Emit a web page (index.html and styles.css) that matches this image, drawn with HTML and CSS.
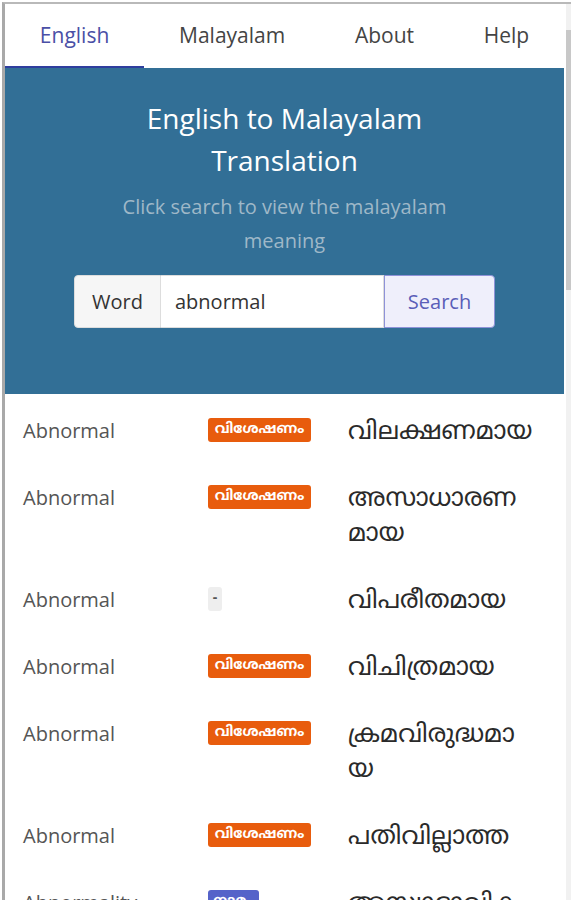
FILE: index.html
```html
<!DOCTYPE html>
<html lang="en">
<head>
<meta charset="utf-8">
<title>English to Malayalam</title>
<link rel="stylesheet" href="styles.css">
</head>
<body>
<div class="window">
  <div class="app">
    <nav class="tabs">
      <a class="tab active">English</a>
      <a class="tab">Malayalam</a>
      <a class="tab">About</a>
      <a class="tab">Help</a>
    </nav>
    <header class="hero">
      <h1 class="title">English to Malayalam Translation</h1>
      <p class="subtitle">Click search to view the malayalam meaning</p>
      <div class="search">
        <span class="addon">Word</span>
        <span class="input">abnormal</span>
        <span class="btn">Search</span>
      </div>
    </header>
    <div class="results">
      <div class="row">
        <div class="en">Abnormal</div>
        <div class="pos"><span class="badge orange">വിശേഷണം</span></div>
        <div class="ml">വിലക്ഷണമായ</div>
      </div>
      <div class="row">
        <div class="en">Abnormal</div>
        <div class="pos"><span class="badge orange">വിശേഷണം</span></div>
        <div class="ml">അസാധാരണ<br>മായ</div>
      </div>
      <div class="row">
        <div class="en">Abnormal</div>
        <div class="pos"><span class="badge grey">-</span></div>
        <div class="ml">വിപരീതമായ</div>
      </div>
      <div class="row">
        <div class="en">Abnormal</div>
        <div class="pos"><span class="badge orange">വിശേഷണം</span></div>
        <div class="ml">വിചിത്രമായ</div>
      </div>
      <div class="row">
        <div class="en">Abnormal</div>
        <div class="pos"><span class="badge orange">വിശേഷണം</span></div>
        <div class="ml">ക്രമവിരുദ്ധമാ<br>യ</div>
      </div>
      <div class="row">
        <div class="en">Abnormal</div>
        <div class="pos"><span class="badge orange">വിശേഷണം</span></div>
        <div class="ml">പതിവില്ലാത്ത</div>
      </div>
      <div class="row">
        <div class="en">Abnormality</div>
        <div class="pos"><span class="badge blue">നാമം</span></div>
        <div class="ml">അസ്വാഭാവിക<br>ത</div>
      </div>
    </div>
  </div>
  <div class="scrollbar"><div class="thumb"></div></div>
</div>
</body>
</html>
```

FILE: styles.css
```css
* { box-sizing: border-box; }
html, body { margin: 0; padding: 0; background: #fff; }
body {
  font-family: "Open Sans", "Noto Sans", sans-serif;
  color: #333;
  overflow: hidden;
  height: 900px;
}
.window {
  display: flex;
  margin: 2px 0 0 2px;
  border-top: 2px solid #b9b9b9;
  border-left: 3px solid #a9a9a9;
  height: 898px;
  overflow: hidden;
}
.app {
  width: 559px;
  flex: none;
}
.scrollbar {
  margin-left: 2px;
  width: 5px;
  background: #f1f1f1;
  padding-top: 26px;
}
.thumb {
  height: 260px;
  background: #c8c8c8;
}
.tabs {
  display: flex;
  height: 64px;
}
.tab {
  flex: 1 1 auto;
  text-align: center;
  font-size: 21px;
  line-height: 62px;
  color: #444;
  border-bottom: 2px solid transparent;
}
.tab.active {
  color: #4a4fa6;
  border-bottom-color: #2f3e9e;
}
.hero {
  background: #326f96;
  padding: 29px 20px 66px;
  text-align: center;
}
.title {
  margin: 0 auto;
  width: 330px;
  font-size: 28px;
  font-weight: 400;
  line-height: 42px;
  color: #fff;
}
.subtitle {
  margin: 9px auto 0;
  width: 380px;
  font-size: 20px;
  line-height: 34px;
  color: #9fb8c8;
}
.search {
  display: flex;
  width: 421px;
  height: 53px;
  margin: 17px auto 0;
  font-size: 20px;
  line-height: 51px;
  border-radius: 4px;
}
.addon {
  width: 87px;
  background: #f6f6f6;
  color: #333;
  border: 1px solid #ddd;
  border-radius: 4px 0 0 4px;
}
.input {
  flex: 1;
  background: #fff;
  text-align: left;
  padding-left: 14px;
  color: #333;
  border: 1px solid #ddd;
  border-left: none;
}
.btn {
  width: 111px;
  background: #efeffb;
  color: #5a5eb8;
  border: 1px solid #8e92d8;
  border-radius: 0 4px 4px 0;
}
.results {
  padding: 3px 0 0;
}
.row {
  display: flex;
  align-items: flex-start;
  padding: 16px 0 16px;
}
.en {
  width: 203px;
  padding-left: 18px;
  font-size: 20px;
  line-height: 35px;
  color: #555;
}
.pos {
  width: 140px;
  padding-top: 5px;
  line-height: 24px;
}
.ml {
  flex: 1;
  padding-top: 3px;
  margin-bottom: -3px;
  font-family: "Noto Sans Malayalam", "Noto Sans", sans-serif;
  font-size: 25px;
  line-height: 35px;
  color: #2a2a2a;
}
.badge {
  display: inline-block;
  height: 24px;
  line-height: 24px;
  padding: 0 5px;
  border-radius: 3px;
  color: #fff;
  font-family: "Noto Sans Malayalam", "Noto Sans", sans-serif;
  font-size: 14px;
  font-weight: 700;
  vertical-align: top;
}
.badge.orange {
  background: #e85c0d;
  width: 103px;
  text-align: center;
}
.badge.grey {
  background: #eeeeee;
  color: #555;
  width: 14px;
  padding: 0;
  text-align: center;
}
.badge.blue {
  background: #5563c9;
  width: 51px;
  text-align: center;
}
```
